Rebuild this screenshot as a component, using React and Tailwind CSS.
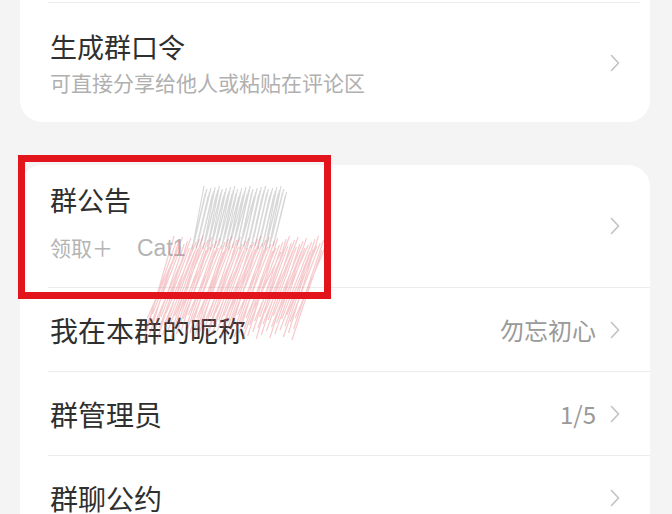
import React from "react";

const font = { fontFamily: '"Noto Sans CJK SC", "Noto Sans", sans-serif' };

function Chevron() {
  return (
    <svg width="10" height="18" viewBox="0 0 10 18" className="shrink-0">
      <path d="M1.5 1.5L8.5 9L1.5 16.5" fill="none" stroke="#c2c2c2" strokeWidth="1.6" strokeLinecap="round" strokeLinejoin="round" />
    </svg>
  );
}

function Row({ title, value }) {
  return (
    <div className="flex flex-col">
      <div className="ml-[28px] h-px bg-[#ececec]" />
      <div className="flex h-[83px] items-center pl-[30px] pr-[30px]">
        <span className="flex-1 text-[28px] text-[#2f2f2f]">{title}</span>
        {value && <span className="mr-[14px] text-[24px] text-[#9a9a9a]">{value}</span>}
        <Chevron />
      </div>
    </div>
  );
}

// pencil scribble over the announcement text
function Scribble() {
  const grey = [];
  for (let i = 0; i < 60; i++) {
    const x = 200 + i * 1.4;
    const top = 186 + ((i * 7) % 11);
    const bot = 250 - ((i * 5) % 13);
    grey.push(`M${x + 4} ${top} L${x - 8} ${bot}`);
  }
  const red = [];
  for (let i = 0; i < 90; i++) {
    const x = 150 + i * 1.7;
    const top = 236 + ((i * 7) % 17);
    const bot = 340 - ((i * 11) % 29);
    red.push(`M${x + 24} ${top} L${x - 6} ${bot}`);
  }
  return (
    <svg className="pointer-events-none absolute left-0 top-0" width="672" height="514">
      <path d={grey.join(" ")} stroke="#a8a8a8" strokeWidth="1.2" opacity="0.45" fill="none" />
      <path d={red.join(" ")} stroke="#e46a72" strokeWidth="1.2" opacity="0.35" fill="none" />
    </svg>
  );
}

export default function App() {
  return (
    <div className="relative h-[514px] w-[672px] overflow-hidden bg-[#f4f4f4]" style={font}>
      <div className="flex flex-col pl-[20px] pr-[22px]">
        {/* group passphrase card, top cut off */}
        <div className="flex flex-col rounded-b-[22px] bg-white pt-[2px]">
          <div className="ml-[28px] mr-[10px] h-px bg-[#ececec]" />
          <div className="flex h-[119px] items-center pl-[30px] pr-[30px]">
            <div className="flex flex-1 flex-col">
              <span className="text-[27px] leading-[34px] text-[#2f2f2f]">生成群口令</span>
              <span className="mt-[4px] text-[21px] leading-[28px] text-[#b0b0b0]">可直接分享给他人或粘贴在评论区</span>
            </div>
            <Chevron />
          </div>
        </div>

        <div className="mt-[43px] flex flex-col rounded-t-[22px] bg-white">
          <div className="flex h-[122px] items-center pl-[30px] pr-[30px]">
            <div className="flex flex-1 flex-col">
              <span className="-mt-[8px] text-[27px] leading-[34px] text-[#2f2f2f]">群公告</span>
              <span className="mt-[16px] text-[21px] leading-[28px] text-[#b4b4b4]">
                领取＋
                <span className="ml-[24px] text-[23px]" style={{ fontFamily: '"Liberation Sans", sans-serif' }}>Cat1</span>
              </span>
            </div>
            <Chevron />
          </div>
          <Row title="我在本群的昵称" value="勿忘初心" />
          <Row title="群管理员" value="1/5" />
          <Row title="群聊公约" />
        </div>
      </div>

      <Scribble />
      {/* red highlight box */}
      <div className="absolute left-[18px] top-[155px] h-[144px] w-[313px] border-[7px] border-[#e2141c]" />
    </div>
  );
}
